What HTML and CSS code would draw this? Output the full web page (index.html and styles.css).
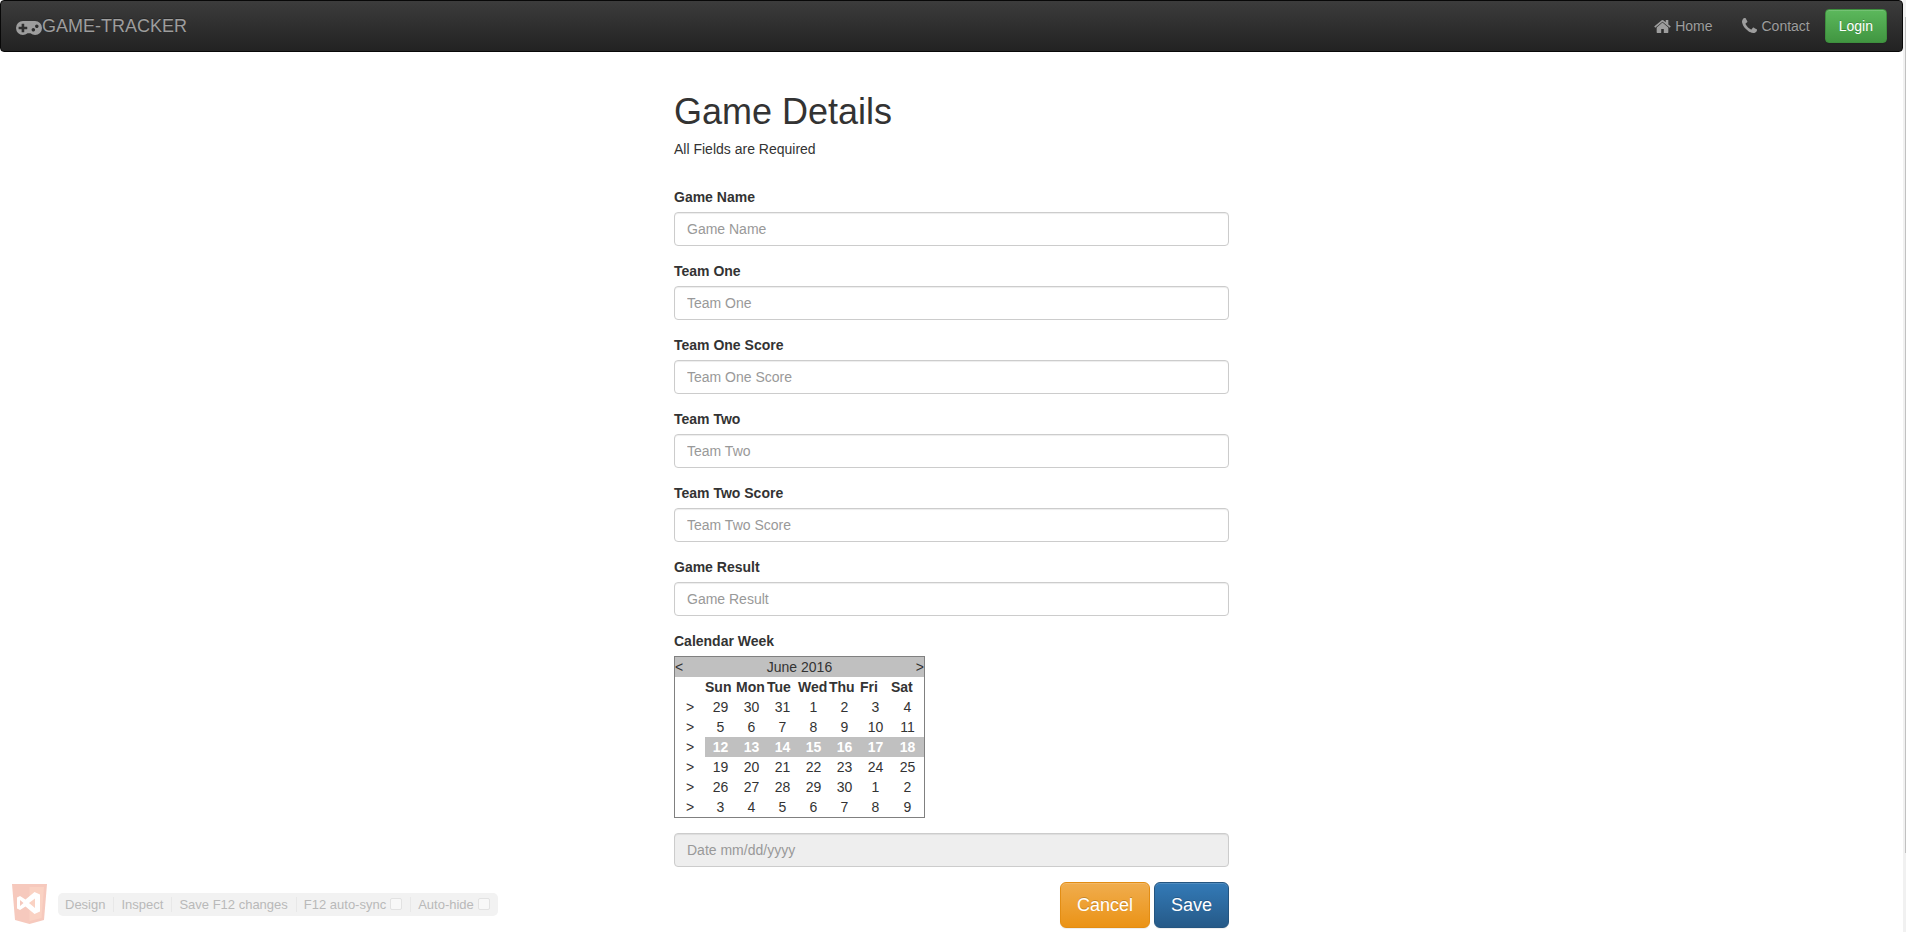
FILE: index.html
```html
<!DOCTYPE html>
<html lang="en">
<head>
<meta charset="utf-8">
<title>Game Details</title>
<link rel="stylesheet" href="styles.css">
</head>
<body>
<nav class="navbar">
  <a class="brand" href="#"><svg class="icon-gamepad" viewBox="0 512 1920 1024" aria-hidden="true"><path d="M832 1088v-128q0-14-9-23t-23-9h-192v-192q0-14-9-23t-23-9h-128q-14 0-23 9t-9 23v192h-192q-14 0-23 9t-9 23v128q0 14 9 23t23 9h192v192q0 14 9 23t23 9h128q14 0 23-9t9-23v-192h192q14 0 23-9t9-23zm576 64q0-53-37.5-90.5t-90.5-37.5-90.5 37.5-37.5 90.5 37.5 90.5 90.5 37.5 90.5-37.5 37.5-90.5zm256-256q0-53-37.5-90.5t-90.5-37.5-90.5 37.5-37.5 90.5 37.5 90.5 90.5 37.5 90.5-37.5 37.5-90.5zm256 128q0 212-150 362t-362 150q-192 0-338-128h-220q-146 128-338 128-212 0-362-150t-150-362 150-362 362-150h896q212 0 362 150t150 362z"/></svg>GAME-TRACKER</a>
  <div class="nav-links">
    <a href="#"><svg class="icon-home" viewBox="64 253 1664 1283" aria-hidden="true"><path d="M1472 992v480q0 26-19 45t-45 19h-384v-384h-256v384h-384q-26 0-45-19t-19-45v-480q0-1 .5-3t.5-3l575-474 575 474q1 2 1 6zm223-69l-62 74q-8 9-21 11h-3q-13 0-21-7l-692-577-692 577q-12 8-24 7-13-2-21-11l-62-74q-8-10-7-23.5t11-21.5l719-599q32-26 76-26t76 26l244 204v-195q0-14 9-23t23-9h192q14 0 23 9t9 23v408l219 182q10 8 11 21.5t-7 23.5z"/></svg>Home</a>
    <a href="#"><svg class="icon-phone" viewBox="192 128 1408 1408" aria-hidden="true"><path d="M1600 1240q0 27-10 70.5t-21 68.5q-21 50-122 106-94 51-186 51-27 0-53-3.5t-57.5-12.5-47-14.5-55.5-20.5-49-18q-98-35-175-83-127-79-264-216t-216-264q-48-77-83-175-3-9-18-49t-20.5-55.5-14.5-47-12.5-57.5-3.5-53q0-92 51-186 56-101 106-122 25-11 68.500-21t70.500-10q14 0 21 3 18 6 53 76 11 19 30 54t35 63.500 31 53.500q3 4 17.500 25t21.500 35.500 7 28.500q0 20-28.500 50t-62 55-62 53-28.500 46q0 9 5 22.500t8.500 20.500 14 24 11.500 19q76 137 174 235t235 174q2 1 19 11.500t24 14 20.500 8.500 22.500 5q18 0 46-28.500t53-62 55-62 50-28.500q14 0 28.500 7t35.500 21.500 25 17.500q25 15 53.500 31t63.500 35 54 30q70 35 76 53 3 7 3 21z"/></svg>Contact</a>
    <button class="btn btn-login" type="button">Login</button>
  </div>
</nav>

<main class="content">
  <h1>Game Details</h1>
  <p class="note">All Fields are Required</p>
  <form>
    <div class="group"><label for="game">Game Name</label><input class="field" id="game" type="text" placeholder="Game Name"></div>
    <div class="group"><label for="team1">Team One</label><input class="field" id="team1" type="text" placeholder="Team One"></div>
    <div class="group"><label for="score1">Team One Score</label><input class="field" id="score1" type="text" placeholder="Team One Score"></div>
    <div class="group"><label for="team2">Team Two</label><input class="field" id="team2" type="text" placeholder="Team Two"></div>
    <div class="group"><label for="score2">Team Two Score</label><input class="field" id="score2" type="text" placeholder="Team Two Score"></div>
    <div class="group"><label for="result">Game Result</label><input class="field" id="result" type="text" placeholder="Game Result"></div>
    <div class="group">
      <label for="date">Calendar Week</label>
      <div class="calendar">
        <div class="month"><a href="#">&lt;</a><span>June 2016</span><a href="#">&gt;</a></div>
        <table>
          <thead>
            <tr><td class="pick"></td><th>Sun</th><th>Mon</th><th>Tue</th><th>Wed</th><th>Thu</th><th>Fri</th><th>Sat</th></tr>
          </thead>
          <tbody>
            <tr><td><a href="#">&gt;</a></td><td>29</td><td>30</td><td>31</td><td>1</td><td>2</td><td>3</td><td>4</td></tr>
            <tr><td><a href="#">&gt;</a></td><td>5</td><td>6</td><td>7</td><td>8</td><td>9</td><td>10</td><td>11</td></tr>
            <tr class="selected"><td><a href="#">&gt;</a></td><td>12</td><td>13</td><td>14</td><td>15</td><td>16</td><td>17</td><td>18</td></tr>
            <tr><td><a href="#">&gt;</a></td><td>19</td><td>20</td><td>21</td><td>22</td><td>23</td><td>24</td><td>25</td></tr>
            <tr><td><a href="#">&gt;</a></td><td>26</td><td>27</td><td>28</td><td>29</td><td>30</td><td>1</td><td>2</td></tr>
            <tr><td><a href="#">&gt;</a></td><td>3</td><td>4</td><td>5</td><td>6</td><td>7</td><td>8</td><td>9</td></tr>
          </tbody>
        </table>
      </div>
    </div>
    <div class="group"><input class="field" id="date" type="text" placeholder="Date mm/dd/yyyy" disabled></div>
    <div class="actions">
      <button class="btn btn-large btn-cancel" type="button">Cancel</button>
      <button class="btn btn-large btn-save" type="submit">Save</button>
    </div>
  </form>
</main>

<aside class="devbar">
  <svg class="devlogo" viewBox="0 0 35 40" aria-hidden="true"><path fill="#f6c9bd" d="M0 0h35l-3 36-14.500 4L3 36z"/><path fill="#fad2c3" d="M17.500 3H32l-2.500 31-12 3z"/><path fill="#fff" fill-rule="evenodd" d="M22.500 8l5.500 2.500v17L22.500 30l-9-7.500L8 26l-3-1.500v-11L8 12l5.500 3.500zM23 14.500L17 19l6 5zM8 16v6l3.500-3z"/></svg>
  <div class="tools">
    <button type="button">Design</button>
    <button type="button">Inspect</button>
    <button type="button">Save F12 changes</button>
    <label>F12 auto-sync<input type="checkbox"></label>
    <label>Auto-hide<input type="checkbox"></label>
  </div>
</aside>
<div class="scroll-track"><div class="scroll-thumb"></div></div>
</body>
</html>
```
FILE: styles.css
```css
* { box-sizing: border-box; }

body {
  margin: 0;
  padding-right: 3px;
  background: #fff;
  color: #333;
  font: 14px/20px "Liberation Sans", Arial, sans-serif;
}

a { color: inherit; text-decoration: none; }
button, input { font-family: inherit; }

.navbar {
  display: flex;
  justify-content: space-between;
  align-items: center;
  min-height: 52px;
  padding: 0 15px;
  border: 1px solid #080808;
  border-radius: 4px;
  background: linear-gradient(#3c3c3c, #222);
  color: #9d9d9d;
  text-shadow: 0 -1px 0 rgba(0, 0, 0, .25);
}
.navbar svg { fill: currentColor; }
.brand { display: flex; align-items: center; font-size: 18px; }
.icon-gamepad { width: 26px; height: 14px; margin-top: 4px; }
.nav-links { display: flex; align-items: center; }
.nav-links a { display: flex; align-items: center; gap: 4px; padding: 15px; }
.icon-home { width: 17px; height: 13px; }
.icon-phone { width: 15px; height: 15px; margin-bottom: 1px; }

.btn {
  padding: 6px 12px;
  border: 1px solid;
  border-radius: 4px;
  color: #fff;
  font-size: 14px;
  line-height: 20px;
  text-shadow: 0 -1px 0 rgba(0, 0, 0, .2);
  box-shadow: inset 0 1px 0 rgba(255, 255, 255, .15), 0 1px 1px rgba(0, 0, 0, .075);
}
.btn-login { padding: 6px 13px; border-color: #3e8f3e; background: linear-gradient(#5cb85c, #419641); }
.btn-large { padding: 10px 16px; border-radius: 6px; font-size: 18px; line-height: 24px; }
.btn-cancel { border-color: #e38d13; background: linear-gradient(#f0ad4e, #eb9316); }
.btn-save { border-color: #245580; background: linear-gradient(#337ab7, #265a88); }

.content { max-width: 555px; margin: 0 auto; padding-top: 40px; }
h1 { margin: 0 0 7px; font-size: 36px; font-weight: 500; line-height: 40px; }
.note { margin: 0 0 28px; }
.group { margin-bottom: 15px; }
.group > label { display: block; margin-bottom: 5px; font-weight: bold; }

.field {
  display: block;
  width: 100%;
  height: 34px;
  padding: 6px 12px;
  border: 1px solid #ccc;
  border-radius: 4px;
  background: #fff;
  color: #555;
  font-size: 14px;
  line-height: 20px;
  box-shadow: inset 0 1px 1px rgba(0, 0, 0, .075);
}
.field::placeholder { color: #999; opacity: 1; }
.field:disabled { background: #eee; }

.calendar { width: 251px; border: 1px solid #808080; }
.month { display: flex; justify-content: space-between; background: #c0c0c0; }
table { width: 100%; border-collapse: collapse; table-layout: fixed; }
th, td { padding: 0; height: 20px; text-align: center; }
th { width: 31px; text-align: left; white-space: nowrap; }
th:last-child { width: auto; }
.pick { width: 30px; }
.selected td:not(:first-child) { background: #c0c0c0; color: #fff; font-weight: bold; }

.actions { display: flex; justify-content: flex-end; gap: 4px; padding-bottom: 5px; }

.devbar {
  position: fixed;
  left: 12px;
  bottom: 8px;
  display: flex;
  align-items: center;
  gap: 11px;
  color: #b9b9b9;
  font-size: 13px;
}
.devlogo { width: 35px; height: 40px; }
.tools { display: flex; padding: 4px 0; border-radius: 5px; background: #f2f2f2; }
.tools > * {
  display: flex;
  align-items: center;
  gap: 4px;
  padding: 0 8px 0 7px;
  border: 0;
  border-left: 1px solid #e8e8e8;
  background: none;
  color: inherit;
  font-size: 13px;
  line-height: 15px;
}
.tools > :first-child { border-left: 0; }
.tools input {
  appearance: none;
  width: 12px;
  height: 12px;
  margin: 0;
  border: 1px solid #e2e2e2;
  border-radius: 2px;
  background: #f8f8f8;
}

.scroll-track { position: fixed; top: 0; right: 0; bottom: 0; width: 3px; background: #f1f1f1; }
.scroll-thumb { width: 1px; height: 836px; margin: 17px 0 0 auto; background: #c1c1c1; }
```
